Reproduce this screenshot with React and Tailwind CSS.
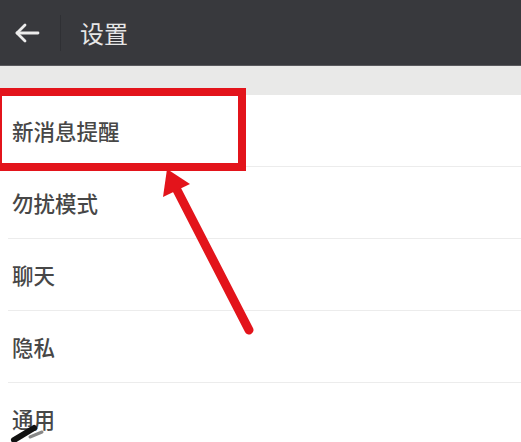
import React from 'react';

const items = ['新消息提醒', '勿扰模式', '聊天', '隐私', '通用'];

export default function App() {
  return (
    <div
      className="relative w-[521px] h-[442px] overflow-hidden bg-white"
      style={{ fontFamily: '"Noto Sans CJK SC", "Noto Sans", sans-serif' }}
    >
      <div className="flex items-center h-[66px] bg-[#38393d] border-b border-[#5a5a5e]">
        <div className="flex items-center justify-center w-[52px] h-full pl-[2px]">
          <svg width="26" height="22" viewBox="0 0 26 22" fill="none" stroke="#ececec" strokeWidth="2.8" strokeLinecap="round" strokeLinejoin="round">
            <path d="M24 11H3" />
            <path d="M11 3L3 11L11 19" />
          </svg>
        </div>
        <div className="w-px h-[36px] bg-[#2f3034] ml-[8px]" />
        <span className="ml-[19px] text-[24px] text-[#e6e6e6] leading-none">设置</span>
      </div>
      <div className="h-[29px] bg-[#e9e9e8]" />
      <ul>
        {items.map((t) => (
          <li key={t} className="ml-[8px] h-[72px] flex items-center border-b border-[#ececec]">
            <span className="pl-[4px] text-[21.5px] font-medium text-[#474747] leading-none">{t}</span>
          </li>
        ))}
      </ul>

      <div className="absolute left-[-6px] top-[88px] w-[252px] h-[83px] border-[8px] border-[#e3141b]" />

      <svg className="absolute left-0 top-0" width="521" height="442" viewBox="0 0 521 442">
        <line x1="177" y1="190" x2="249" y2="330" stroke="#e3141b" strokeWidth="9" strokeLinecap="round" />
        <polygon points="167,169 163,197 190,184" fill="#e3141b" />
        <path d="M14 440 L34 428" stroke="#111" strokeWidth="6" strokeLinecap="round" />
        <path d="M30 437 L42 432" stroke="#888" strokeWidth="3" strokeLinecap="round" />
      </svg>
    </div>
  );
}
